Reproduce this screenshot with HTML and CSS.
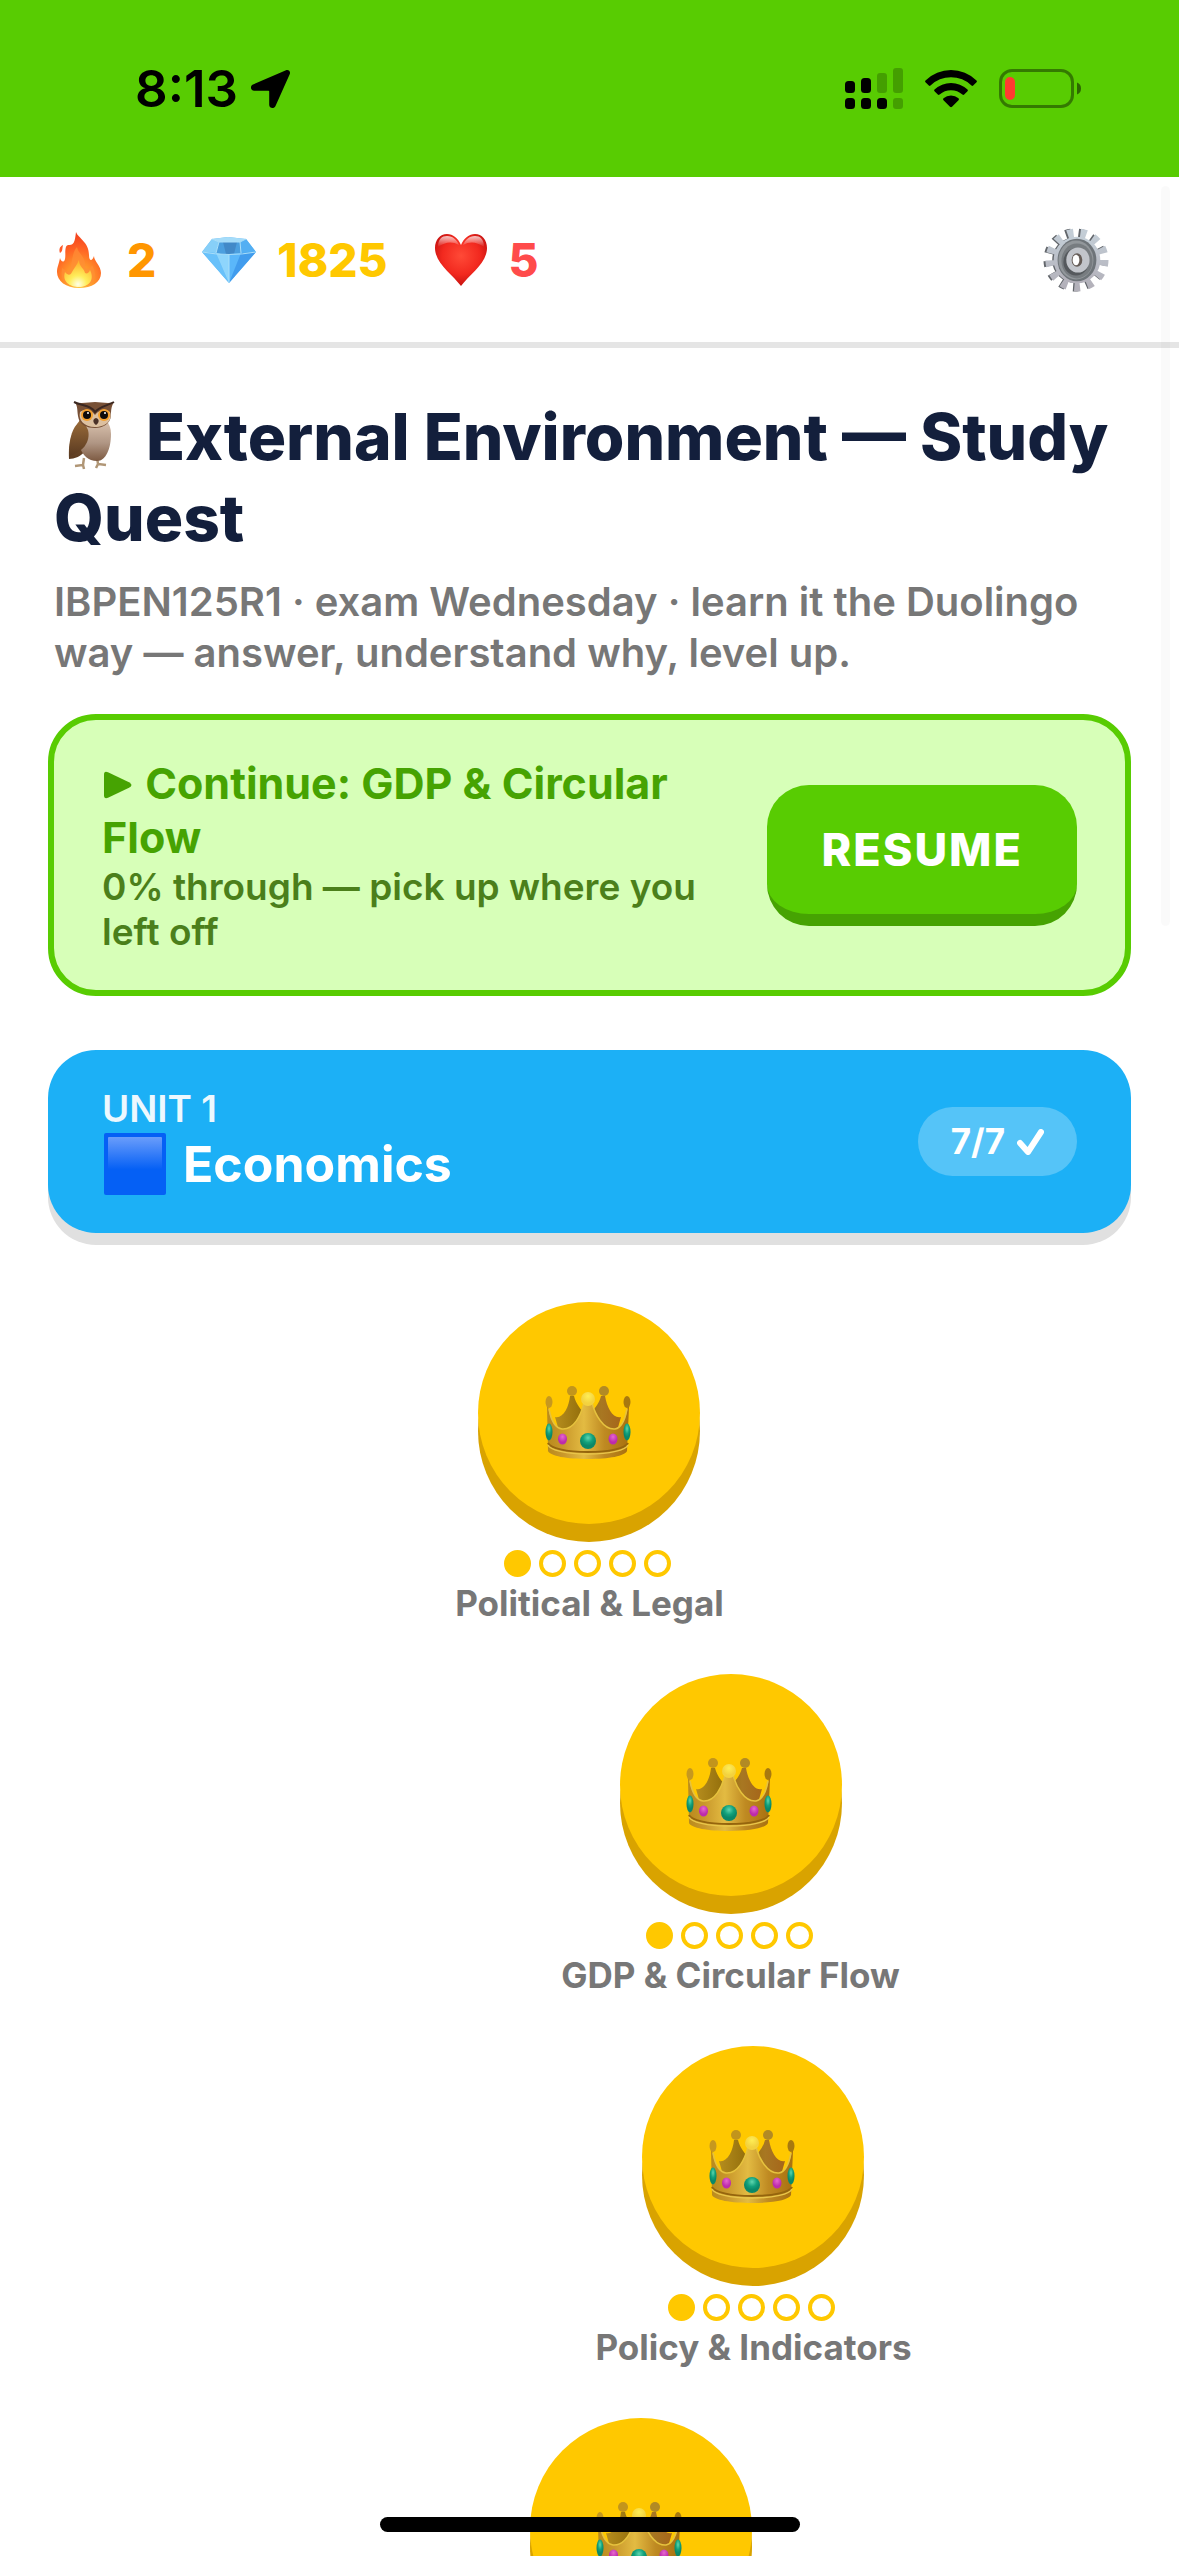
FILE: index.html
```html
<!DOCTYPE html>
<html lang="en">
<head>
    <meta charset="UTF-8">
    <meta name="viewport" content="width=device-width, initial-scale=1.0">
    <title>External Environment — Study Quest</title>
    <link rel="stylesheet" href="styles.css">
</head>
<body>
    <!-- Shared crown drawing -->
    <svg class="defs" aria-hidden="true">
        <defs>
            <linearGradient id="gold" x1="0" x2="1">
                <stop offset="0" stop-color="#b98a1c"/>
                <stop offset=".2" stop-color="#c9982b"/>
                <stop offset=".45" stop-color="#e3bb42"/>
                <stop offset=".7" stop-color="#bf8a22"/>
                <stop offset="1" stop-color="#a8700f"/>
            </linearGradient>
            <linearGradient id="goldBack" x1="0" x2="1">
                <stop offset="0" stop-color="#b58d1e"/>
                <stop offset=".4" stop-color="#95700c"/>
                <stop offset=".7" stop-color="#a87722"/>
                <stop offset="1" stop-color="#a5661a"/>
            </linearGradient>
            <radialGradient id="ball" cy=".3">
                <stop offset="0" stop-color="#ffee55"/>
                <stop offset="1" stop-color="#f3d23f"/>
            </radialGradient>
            <radialGradient id="green" cy=".3">
                <stop offset="0" stop-color="#5fd6ae"/>
                <stop offset=".6" stop-color="#12a17c"/>
                <stop offset="1" stop-color="#0b8868"/>
            </radialGradient>
            <radialGradient id="pink" cy=".3">
                <stop offset="0" stop-color="#e667cf"/>
                <stop offset="1" stop-color="#bd2bac"/>
            </radialGradient>
        </defs>
        <symbol id="crown" viewBox="0 0 86 74">
            <path d="M10 32c8 2 14-10 15-21h4c2 8 7 14 13 20 7-6 12-12 14-20h4c2 12 8 23 16 21l-4 14H14z" fill="url(#goldBack)"/>
            <circle cx="27" cy="6" r="5" fill="#c2951c"/>
            <circle cx="59" cy="6" r="5" fill="#b28a24"/>
            <path d="M3 20c1 10 5 22 14 24 12 1 19-14 22-26h8c3 12 11 27 23 26 8-2 12-14 13-24l1 2-2 44c-2 5-18 8-39 8S5 71 3 66L2 22z" fill="url(#gold)"/>
            <path d="M4 24c2 11 6 19 13 20 12 1 19-14 22-26M82 24c-2 11-6 19-12 20-12 1-20-15-23-26" fill="none" stroke="#e6c23e" stroke-width="1.5"/>
            <ellipse cx="4" cy="17" rx="3.500" ry="6" fill="#c6981f"/>
            <ellipse cx="82" cy="17" rx="3.500" ry="6" fill="#a8790f"/>
            <circle cx="43" cy="14" r="7" fill="url(#ball)"/>
            <path d="M3 58c2 5 18 9 40 9s38-4 40-9" fill="none" stroke="#95650d" stroke-width="2"/>
            <path d="M3 60c2 5 18 9 40 9s38-4 40-9" fill="none" stroke="#e9c64a" stroke-width="1.5"/>
            <ellipse cx="4" cy="47" rx="3.500" ry="8.500" fill="url(#green)"/>
            <ellipse cx="82" cy="47" rx="3.500" ry="8.500" fill="url(#green)"/>
            <ellipse cx="17.500" cy="54" rx="4.500" ry="5.500" fill="url(#pink)"/>
            <ellipse cx="68" cy="54" rx="4.500" ry="5.500" fill="url(#pink)"/>
            <circle cx="43" cy="56" r="8" fill="url(#green)"/>
        </symbol>
    </svg>

    <div class="phone">
        <!-- Status bar -->
        <div class="status-bar">
            <div class="status-time">
                <span>8:13</span>
                <svg width="41" height="40" viewBox="0 0 41 40" aria-hidden="true">
                    <path d="M36 1.200c2.500-1 4.800 1.200 3.800 3.800L25.500 37c-1.500 3.200-6.300 2.400-6.300-1.300V22.500q0-.7-.7-.7H4.300c-3.800 0-4.600-4.800-1.300-6.300z"/>
                </svg>
            </div>
            <div class="status-icons">
                <svg width="58" height="41" viewBox="0 0 58 41" aria-hidden="true">
                    <rect y="13" width="10" height="12" rx="3.500"/>
                    <rect x="16" y="10" width="10" height="15" rx="3.500"/>
                    <rect x="32" y="5" width="10" height="20" rx="3" opacity=".22"/>
                    <rect x="48" width="10" height="25" rx="3" opacity=".22"/>
                    <rect y="30" width="10" height="11" rx="3.500"/>
                    <rect x="16" y="30" width="10" height="11" rx="3.500"/>
                    <rect x="32" y="30" width="10" height="11" rx="3.500"/>
                    <rect x="48" y="30" width="10" height="11" rx="3" opacity=".22"/>
                </svg>
                <svg width="52" height="38" viewBox="0 0 52 38" aria-hidden="true">
                    <path d="M.5 10.500a36.500 36.500 0 0 1 51 0q.8.900 0 1.700l-3.300 3.300q-.8.800-1.700 0a29.500 29.500 0 0 0-41 0q-.9.800-1.700 0L.5 12.200q-.8-.8 0-1.700z"/>
                    <path d="M9.500 19.500a24 24 0 0 1 33 0q.9.900 0 1.800l-3.300 3.300q-.8.800-1.800 0a17 17 0 0 0-22.800 0q-1 .8-1.800 0l-3.300-3.300q-.9-.9 0-1.800z"/>
                    <path d="M18.500 28.300a11.500 11.500 0 0 1 15 0q1 .9 0 1.900L27 36.800q-1 .9-2 0l-6.500-6.600q-1-1 0-1.900z"/>
                </svg>
                <svg width="82" height="39" viewBox="0 0 82 39" aria-hidden="true">
                    <rect x="1.500" y="1.500" width="72" height="36" rx="11.500" fill="none" stroke="#000" stroke-width="3" opacity=".4"/>
                    <path d="M78 13.500q4 1.500 4 6t-4 6z" opacity=".5"/>
                    <rect x="6" y="8" width="10" height="23" rx="5" fill="#ff3b30"/>
                </svg>
            </div>
        </div>

        <!-- Stats -->
        <header class="topbar">
            <div class="stat streak">
                <svg width="56" height="56" viewBox="0 0 56 56" aria-hidden="true">
                    <defs>
                        <radialGradient id="fire" cx=".5" cy=".9" r=".85">
                            <stop offset="0" stop-color="#ffd84a"/>
                            <stop offset=".35" stop-color="#ff9a2b"/>
                            <stop offset=".7" stop-color="#ff6424"/>
                            <stop offset="1" stop-color="#f4431f"/>
                        </radialGradient>
                        <radialGradient id="fireIn" cx=".5" cy=".9" r=".8">
                            <stop offset="0" stop-color="#ffffe8"/>
                            <stop offset=".4" stop-color="#ffee5c"/>
                            <stop offset="1" stop-color="#ffb52e"/>
                        </radialGradient>
                    </defs>
                    <path d="M25 0c2 6 13 10 13 23 0 6 3 7 5 1 0 5 7 10 7 17 0 9-9 15-22 15S6 49 6 40c0-5 2-8 3-14 1 4 4 5 5 1 1-4-1-13 3-14 7 1 7-6 8-13z" fill="url(#fire)"/>
                    <path d="M26 15c1 7 9 9 8 20 2 3 6 2 7-2 7 13 1 22-13 22S9 49 11 36c3 1 4 5 7 3 4-8 2-17 8-24z" fill="#ff8f36" opacity=".7"/>
                    <path d="M28 28c0 7 5 8 6 13 2 1 4 0 5-3 5 10-1 17-11 17S11 49 14 40c3 4 6 3 7 0 2-4 5-7 7-12z" fill="url(#fireIn)"/>
                    <path d="M12 13c-4 2-4 5-3 8 3-2 2-4 3-8z" fill="#ff5a2a"/>
                </svg>
                <span>2</span>
            </div>
            <div class="stat gems">
                <svg width="56" height="56" viewBox="0 0 56 56" aria-hidden="true">
                    <path d="M11 7l16-2 18 2 10 13-27 31L1 20z" fill="#5fb8f6"/>
                    <path d="M11 7l16-2 18 2-6 3H18z" fill="#a5dcf9"/>
                    <path d="M11 7l7 3-3 11L1 20z" fill="#87cff8"/>
                    <path d="M18 10h21l1 11q-12 3-25 0z" fill="#4c9fdf"/>
                    <path d="M39 10l6-3 10 13-15 1z" fill="#53aff3"/>
                    <path d="M22 10l3 12h8l3-12z" fill="#4289c8"/>
                    <path d="M1 20l14 1 13 30z" fill="#69c1fa"/>
                    <path d="M15 21q12 3 13 1v29z" fill="#8ed5fc"/>
                    <path d="M28 22l12-1-12 30z" fill="#5ab7fa"/>
                    <path d="M40 21l15-1-27 31z" fill="#419ced"/>
                    <path d="M1 20q27 5 54 0M11 7l7 3-3 11M45 7l-6 3 1 11M18 10h21M28 22v29" fill="none" stroke="#a9def9" stroke-width="1"/>
                </svg>
                <span>1825</span>
            </div>
            <div class="stat hearts">
                <svg width="56" height="56" viewBox="0 0 56 56" aria-hidden="true">
                    <defs>
                        <radialGradient id="heart" cx=".5" cy=".42" r=".6">
                            <stop offset="0" stop-color="#ff4a37"/>
                            <stop offset=".6" stop-color="#f2291f"/>
                            <stop offset="1" stop-color="#c2100f"/>
                        </radialGradient>
                        <linearGradient id="shine" x2="0" y2="1">
                            <stop offset="0" stop-color="#fff" stop-opacity=".75"/>
                            <stop offset="1" stop-color="#fff" stop-opacity="0"/>
                        </linearGradient>
                    </defs>
                    <path d="M28 13C31 6 36 2 42 2c7 0 12 6 12 14 0 15-17 26-26 38C19 42 2 31 2 16 2 8 7 2 14 2c6 0 11 4 14 11z" fill="url(#heart)"/>
                    <path d="M5 15c0-8 4-11 9-11 6 0 10 4 12 9-7-4-14-3-21 2zM51 15c0-8-4-11-9-11-6 0-10 4-12 9 7-4 14-3 21 2z" fill="url(#shine)"/>
                </svg>
                <span>5</span>
            </div>
            <button type="button" class="settings" aria-label="Settings">
                <svg width="66" height="66" viewBox="0 0 68 68" aria-hidden="true">
                    <defs>
                        <linearGradient id="steel" x2="0" y2="1">
                            <stop offset="0" stop-color="#c3cdd6"/>
                            <stop offset="1" stop-color="#b3b1ba"/>
                        </linearGradient>
                    </defs>
                    <g fill="none" stroke="#62666b">
                        <circle cx="33" cy="34" r="27" stroke-width="11" pathLength="26" stroke-dasharray=".8 1.200"/>
                        <circle cx="33" cy="34" r="21" stroke-width="5"/>
                    </g>
                    <g fill="none" stroke="url(#steel)">
                        <circle cx="35" cy="34" r="27" stroke-width="11" pathLength="26" stroke-dasharray=".9 1.100"/>
                        <circle cx="35" cy="34" r="21" stroke-width="6"/>
                    </g>
                    <ellipse cx="35" cy="34" rx="20" ry="22" fill="#6e7479"/>
                    <ellipse cx="34" cy="34" rx="18" ry="20" fill="#92979b"/>
                    <ellipse cx="35" cy="35" rx="16" ry="18" fill="#777c80"/>
                    <ellipse cx="34" cy="36" rx="13" ry="14" fill="#55595d"/>
                    <ellipse cx="36" cy="34" rx="12" ry="13" fill="#c2c5cb"/>
                    <ellipse cx="35" cy="34" rx="5.500" ry="7" fill="#655c57"/>
                    <ellipse cx="34" cy="34" rx="3.500" ry="5.500" fill="#fff"/>
                </svg>
            </button>
        </header>

        <main class="content">
            <h1>
                <svg class="owl" width="83" height="70" viewBox="0 0 83 70" aria-hidden="true">
                    <defs>
                        <linearGradient id="wing" x2="0" y2="1">
                            <stop offset="0" stop-color="#9a6c3a"/>
                            <stop offset="1" stop-color="#5a3a21"/>
                        </linearGradient>
                        <linearGradient id="belly" x2="0" y2="1">
                            <stop offset="0" stop-color="#e4cdb8"/>
                            <stop offset=".6" stop-color="#b09684"/>
                            <stop offset="1" stop-color="#7d5a42"/>
                        </linearGradient>
                    </defs>
                    <g transform="translate(4 0)">
                        <path d="M26 58l-1 7-8 1m8-1l1 4m13-12l1 7 8 1m-8-1l-2 4" fill="none" stroke="#b09676" stroke-width="2.500"/>
                        <path d="M22 22c-8 4-12 20-11 37 5 0 13-3 16-8z" fill="url(#wing)"/>
                        <path d="M22 18c18-6 31 0 31 16 0 14-5 27-14 27-9 0-14-6-17-13-3-10-2-22 0-30z" fill="url(#belly)"/>
                        <path d="M22 20c-6 8-11 18-11 36 13-3 22-14 19-26-2-5-5-8-8-10z" fill="url(#wing)"/>
                        <path d="M16 2c8 2 15 0 21 0s14 2 19 0c-3 5-3 9-3 14-1 8-8 12-16 12s-16-3-17-12c-1-6 0-11-4-14z" fill="#775036"/>
                        <path d="M22 12c6-4 11-2 15 3 4-5 10-7 15-3 3 8-4 15-15 15s-17-7-15-15z" fill="#dcc0a0"/>
                        <circle cx="29" cy="15" r="6" fill="#f4a02d"/>
                        <circle cx="46" cy="15" r="6" fill="#f4a02d"/>
                        <circle cx="29" cy="15" r="4" fill="#0d0b0b"/>
                        <circle cx="46" cy="15" r="4" fill="#0d0b0b"/>
                        <circle cx="30" cy="13" r="1" fill="#fff"/>
                        <circle cx="47" cy="13" r="1" fill="#fff"/>
                        <path d="M38 18c4 1 3 5 0 7-3-2-4-6 0-7z" fill="#4a3128"/>
                        <path d="M16 2c8 4 17 3 21 10 5-6 12-6 19-10" fill="none" stroke="#3a2720" stroke-width="2"/>
                    </g>
                </svg>External Environment — Study Quest
            </h1>
            <p class="subtitle">IBPEN125R1 · exam Wednesday · learn it the Duolingo way — answer, understand why, level up.</p>

            <!-- Continue card -->
            <section class="resume-card">
                <div class="resume-text">
                    <h2>
                        <svg width="33" height="28" viewBox="0 0 33 28" aria-hidden="true">
                            <path d="M2 3.500q0-4 4-2.300L27 11.200q5 2.800 0 5.600L6 26.800q-4 1.500-4-2.500z"/>
                        </svg>
                        Continue: GDP &amp; Circular Flow
                    </h2>
                    <p>0% through — pick up where you left off</p>
                </div>
                <button type="button" class="btn">RESUME</button>
            </section>

            <!-- Unit 1 -->
            <section class="unit">
                <div>
                    <p class="unit-number">UNIT 1</p>
                    <h2 class="unit-title">
                        <svg width="66" height="62" viewBox="0 0 66 62" aria-hidden="true">
                            <defs>
                                <linearGradient id="blue" x2="0" y2="1">
                                    <stop offset="0" stop-color="#6a9dfb"/>
                                    <stop offset=".6" stop-color="#0560f5"/>
                                </linearGradient>
                            </defs>
                            <rect x="2" width="62" height="62" rx="2" fill="#0560f5"/>
                            <rect x="6" y="4" width="54" height="54" rx="1" fill="url(#blue)"/>
                        </svg>
                        Economics
                    </h2>
                </div>
                <div class="unit-badge">
                    7/7
                    <svg width="27" height="26" viewBox="0 0 27 26" aria-hidden="true">
                        <path d="M3 14l8 9L24 3"/>
                    </svg>
                </div>
            </section>

            <!-- Lesson path -->
            <ul class="path">
                <li>
                    <a href="#" class="lesson">
                        <span class="circle"><svg class="crown" aria-hidden="true"><use href="#crown"/></svg></span>
                        <span class="dots"><i class="on"></i><i></i><i></i><i></i><i></i></span>
                        <span class="label">Political &amp; Legal</span>
                    </a>
                </li>
                <li>
                    <a href="#" class="lesson">
                        <span class="circle"><svg class="crown" aria-hidden="true"><use href="#crown"/></svg></span>
                        <span class="dots"><i class="on"></i><i></i><i></i><i></i><i></i></span>
                        <span class="label">GDP &amp; Circular Flow</span>
                    </a>
                </li>
                <li>
                    <a href="#" class="lesson">
                        <span class="circle"><svg class="crown" aria-hidden="true"><use href="#crown"/></svg></span>
                        <span class="dots"><i class="on"></i><i></i><i></i><i></i><i></i></span>
                        <span class="label">Policy &amp; Indicators</span>
                    </a>
                </li>
                <li>
                    <a href="#" class="lesson" aria-label="Next lesson">
                        <span class="circle"><svg class="crown" aria-hidden="true"><use href="#crown"/></svg></span>
                    </a>
                </li>
            </ul>
        </main>

        <div class="scroll-thumb"></div>
        <div class="home-indicator"></div>
    </div>
</body>
</html>
```
FILE: styles.css
```css
* {
    margin: 0;
    padding: 0;
    box-sizing: border-box;
}

body {
    font-family: Inter, "Liberation Sans", sans-serif;
    background-color: #fff;
    color: #777;
}

button {
    font-family: inherit;
    border: none;
    cursor: pointer;
}

.defs {
    position: absolute;
    width: 0;
    height: 0;
}

.phone {
    position: relative;
    height: 100vh;
    overflow: hidden;
}

/* Status bar */
.status-bar {
    display: flex;
    justify-content: space-between;
    align-items: center;
    height: 177px;
    padding: 0 98px 0 135px;
    background-color: #58cc02;
    color: #000;
}

.status-time {
    display: flex;
    align-items: center;
    gap: 12px;
    font-size: 51px;
    font-weight: 600;
}

.status-icons {
    display: flex;
    align-items: center;
    gap: 22px;
}

/* Stats */
.topbar {
    display: flex;
    align-items: center;
    gap: 45px;
    height: 171px;
    padding: 0 70px 0 51px;
    border-bottom: 6px solid #e5e5e5;
}

.stat {
    display: flex;
    align-items: center;
    gap: 20px;
    font-size: 46px;
    font-weight: 800;
}

.streak { color: #ff9600; }
.gems { color: #ffc800; }
.hearts { color: #ff4b4b; }

.settings {
    margin-left: auto;
    background: none;
    line-height: 0;
}

/* Content */
.content {
    padding: 48px;
}

h1 {
    padding: 0 6px;
    font-size: 64px;
    line-height: 81px;
    font-weight: 800;
    color: #131f3c;
}

.owl {
    margin-right: 9px;
    vertical-align: -10px;
}

.subtitle {
    margin: 18px 0 36px;
    padding: 0 6px;
    font-size: 40px;
    line-height: 51px;
    font-weight: 600;
}

/* Continue card */
.resume-card {
    display: flex;
    align-items: center;
    gap: 48px;
    padding: 36px 48px;
    border: 6px solid #58cc02;
    border-radius: 48px;
    background-color: #d7ffb8;
}

.resume-text {
    flex: 1;
}

.resume-text h2 {
    font-size: 43px;
    line-height: 54px;
    font-weight: 700;
    color: #46a302;
}

.resume-text h2 svg {
    fill: #46a302;
}

.resume-text p {
    font-size: 37px;
    line-height: 45px;
    font-weight: 600;
    color: #4b7f1b;
}

.btn {
    padding: 36px 54px;
    border-bottom: 12px solid #46a302;
    border-radius: 42px;
    background-color: #58cc02;
    color: #fff;
    font-size: 45px;
    line-height: 57px;
    font-weight: 800;
    letter-spacing: 2px;
}

/* Unit banner */
.unit {
    display: flex;
    justify-content: space-between;
    align-items: center;
    margin-top: 54px;
    padding: 36px 54px;
    border-radius: 48px;
    background-color: #1cb0f6;
    box-shadow: 0 12px 0 #e0e0e0;
    color: #fff;
}

.unit-number {
    font-size: 37px;
    line-height: 45px;
    font-weight: 600;
    opacity: 0.92;
}

.unit-title {
    display: flex;
    align-items: center;
    gap: 15px;
    font-size: 50px;
    line-height: 66px;
    font-weight: 700;
}

.unit-badge {
    display: flex;
    align-items: center;
    gap: 12px;
    padding: 12px 33px;
    border-radius: 36px;
    background-color: rgba(255, 255, 255, 0.25);
    font-size: 35px;
    line-height: 45px;
    font-weight: 700;
}

.unit-badge path {
    fill: none;
    stroke: #fff;
    stroke-width: 6;
    stroke-linecap: round;
    stroke-linejoin: round;
}

/* Lesson path */
.path {
    display: flex;
    flex-direction: column;
    gap: 48px;
    margin-top: 69px;
    list-style: none;
}

.path li {
    display: flex;
    justify-content: center;
}

/* The path winds to the right and back */
.path li:nth-child(2) { padding-left: 282px; }
.path li:nth-child(3) { padding-left: 328px; }
.path li:nth-child(4) { padding-left: 102px; }

.lesson {
    display: flex;
    flex-direction: column;
    align-items: center;
    color: #777;
    text-decoration: none;
}

.circle {
    display: flex;
    justify-content: center;
    align-items: center;
    width: 222px;
    height: 222px;
    padding: 18px 3px 0 0;
    border-radius: 50%;
    background-color: #ffc800;
    box-shadow: 0 18px 0 #d9a300;
}

.crown {
    width: 86px;
    height: 74px;
}

.dots {
    display: flex;
    gap: 8px;
    margin: 26px 3px 0 0;
}

.dots i {
    width: 27px;
    height: 27px;
    border: 4px solid #ffc800;
    border-radius: 50%;
}

.dots .on {
    background-color: #ffc800;
}

.label {
    margin-top: 3px;
    font-size: 35px;
    line-height: 46px;
    font-weight: 700;
}

/* Overlays */
.scroll-thumb {
    position: absolute;
    top: 186px;
    right: 9px;
    width: 9px;
    height: 740px;
    border-radius: 5px;
    background-color: rgba(0, 0, 0, 0.02);
}

.home-indicator {
    position: absolute;
    bottom: 24px;
    left: 50%;
    width: 420px;
    height: 15px;
    margin-left: -210px;
    border-radius: 8px;
    background-color: #000;
}
```
